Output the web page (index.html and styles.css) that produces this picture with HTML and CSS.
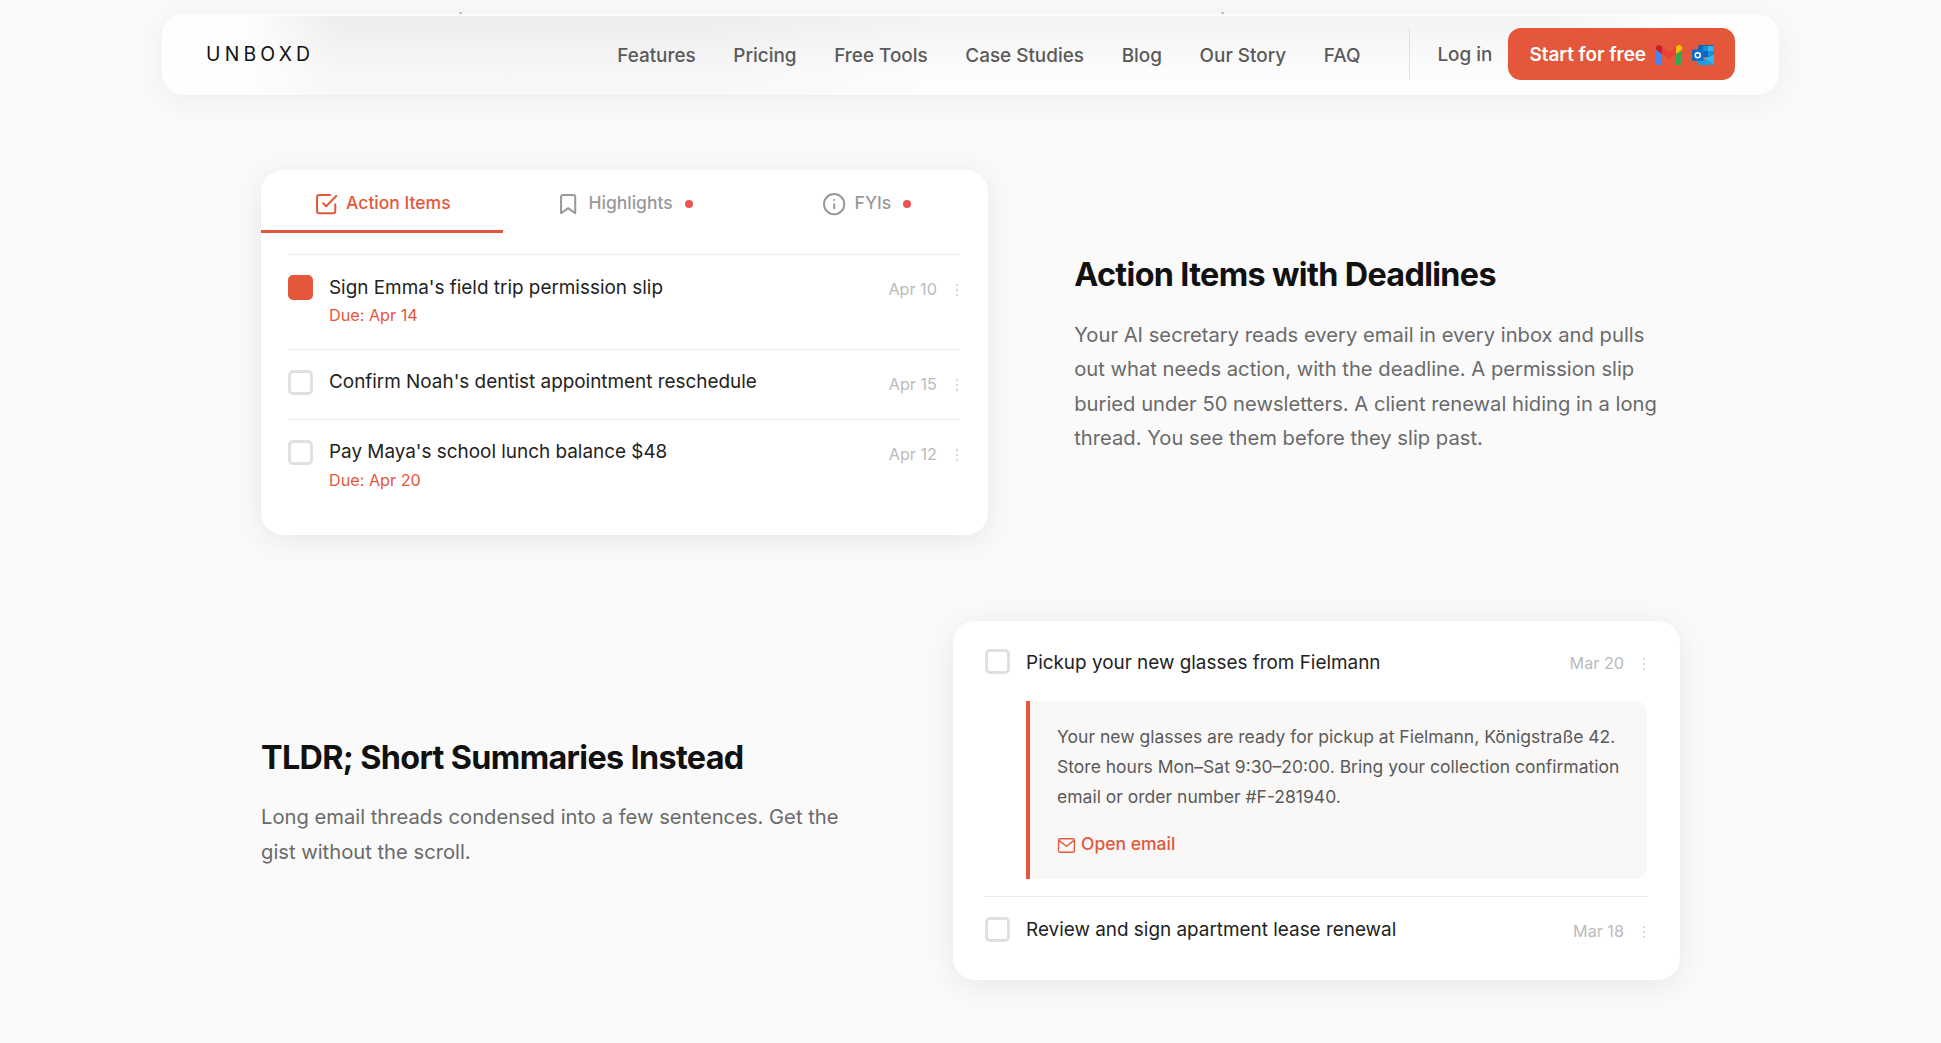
FILE: index.html
```html
<!DOCTYPE html>
<html lang="en">
<head>
  <meta charset="UTF-8">
  <meta name="viewport" content="width=device-width, initial-scale=1.0">
  <title>Unboxd</title>
  <link rel="stylesheet" href="styles.css">
</head>
<body>

  <header class="navbar">
    <a class="logo">UNBOXD</a>
    <nav class="nav-links">
      <a>Features</a>
      <a>Pricing</a>
      <a>Free Tools</a>
      <a>Case Studies</a>
      <a>Blog</a>
      <a>Our Story</a>
      <a>FAQ</a>
    </nav>
    <div class="nav-actions">
      <a class="login">Log in</a>
      <a class="btn-start">
        <span>Start for free</span>
        <svg class="gmail" viewBox="0 0 26 20">
          <path d="M0 5v13.2C0 19.2.8 20 1.8 20H6V8.5z" fill="#4285f4"/>
          <path d="M20 8.5V20h4.2c1 0 1.8-.8 1.8-1.8V5z" fill="#34a853"/>
          <path d="M20 2v7l6-4.3V3c0-2.6-2.8-3.8-4.7-2.3z" fill="#fbbc04"/>
          <path d="M6 9V2l7 5.200L20 2v7l-7 5.200z" fill="#ea4335"/>
          <path d="M0 3v1.700L6 9V2L4.700.7C2.800-.8 0 .4 0 3z" fill="#c5221f"/>
        </svg>
        <svg class="outlook" viewBox="0 0 23 20">
          <rect x="6" y="0" width="15.5" height="12" rx="1" fill="#1066b8"/>
          <path d="M11 1h5v5h-5z" fill="#1490df"/>
          <path d="M16 1h5.500v5H16z" fill="#35b8f1"/>
          <path d="M16 6h5.500v5H16z" fill="#1c8fe0"/>
          <path d="M5 11l8.500 4L22 9.500V19a1 1 0 0 1-1 1H6a1 1 0 0 1-1-1z" fill="#1b9de2"/>
          <path d="M22 9.500V19L12 13.800z" fill="#35b8f1"/>
          <rect x="0" y="4.5" width="11.5" height="11.5" rx="1" fill="#0a6ccb"/>
          <circle cx="5.7" cy="10.2" r="2.5" fill="none" stroke="#fff" stroke-width="1.5"/>
        </svg>
      </a>
    </div>
  </header>

  <main class="features">

    <section class="feature">
      <div class="card card-tabs">
        <div class="tabs">
          <div class="tab active">
            <svg class="icon" viewBox="0 0 24 24"><path d="M9 11l3 3L22 4"/><path d="M21 12v7a2 2 0 0 1-2 2H5a2 2 0 0 1-2-2V5a2 2 0 0 1 2-2h11"/></svg>
            <span>Action Items</span>
          </div>
          <div class="tab">
            <svg class="icon" viewBox="0 0 24 24"><path d="M19 21l-7-5-7 5V5a2 2 0 0 1 2-2h10a2 2 0 0 1 2 2z"/></svg>
            <span>Highlights</span>
            <i class="dot"></i>
          </div>
          <div class="tab">
            <svg class="icon" viewBox="0 0 24 24"><circle cx="12" cy="12" r="10"/><path d="M12 16v-4M12 8h.01"/></svg>
            <span>FYIs</span>
            <i class="dot"></i>
          </div>
        </div>
        <div class="list">
          <div class="item">
            <span class="check checked"></span>
            <div class="item-body">
              <div class="item-title">Sign Emma's field trip permission slip</div>
              <div class="item-due">Due: Apr 14</div>
            </div>
            <span class="date">Apr 10</span>
            <span class="more"><i></i><i></i><i></i></span>
          </div>
          <div class="item">
            <span class="check"></span>
            <div class="item-body">
              <div class="item-title">Confirm Noah's dentist appointment reschedule</div>
            </div>
            <span class="date">Apr 15</span>
            <span class="more"><i></i><i></i><i></i></span>
          </div>
          <div class="item">
            <span class="check"></span>
            <div class="item-body">
              <div class="item-title">Pay Maya's school lunch balance $48</div>
              <div class="item-due">Due: Apr 20</div>
            </div>
            <span class="date">Apr 12</span>
            <span class="more"><i></i><i></i><i></i></span>
          </div>
        </div>
      </div>
      <div class="copy">
        <h2>Action Items with Deadlines</h2>
        <p>Your AI secretary reads every email in every inbox and pulls out what needs action, with the deadline. A permission slip buried under 50 newsletters. A client renewal hiding in a long thread. You see them before they slip past.</p>
      </div>
    </section>

    <section class="feature reverse">
      <div class="copy">
        <h2>TLDR; Short Summaries Instead</h2>
        <p>Long email threads condensed into a few sentences. Get the gist without the scroll.</p>
      </div>
      <div class="card card-summary">
        <div class="item">
          <span class="check"></span>
          <div class="item-body">
            <div class="item-title">Pickup your new glasses from Fielmann</div>
          </div>
          <span class="date">Mar 20</span>
          <span class="more"><i></i><i></i><i></i></span>
        </div>
        <div class="summary">
          <p>Your new glasses are ready for pickup at Fielmann, Königstraße 42. Store hours Mon–Sat 9:30–20:00. Bring your collection confirmation email or order number #F-281940.</p>
          <a class="open-email">
            <svg viewBox="0 0 24 24"><rect x="2" y="3.5" width="20" height="17" rx="2"/><path d="M2.500 5.500L12 13l9.500-7.500"/></svg>
            <span>Open email</span>
          </a>
        </div>
        <div class="item last">
          <span class="check"></span>
          <div class="item-body">
            <div class="item-title">Review and sign apartment lease renewal</div>
          </div>
          <span class="date">Mar 18</span>
          <span class="more"><i></i><i></i><i></i></span>
        </div>
      </div>
    </section>

  </main>

</body>
</html>
```
FILE: styles.css
```css
* {
  box-sizing: border-box;
}

body {
  margin: 0;
  min-height: 100vh;
  padding-top: 13px;
  background: #fafafa;
  font-family: Inter, "Liberation Sans", sans-serif;
  color: #222;
}

/* navbar */
.navbar {
  position: relative;
  display: flex;
  align-items: center;
  width: 1617px;
  height: 82px;
  margin: 0 auto;
  padding: 0 44px 0 44px;
  border-radius: 22px;
  background:
    linear-gradient(to bottom, #fbfbfb 3px, rgba(255, 255, 255, 0) 3px),
    linear-gradient(to right, #fefefe 5%, rgba(254, 254, 254, 0) 11%, rgba(254, 254, 254, 0) 85%, #fefefe 94%),
    linear-gradient(to right, rgba(0, 0, 0, 0.025) 34%, rgba(0, 0, 0, 0) 48%),
    linear-gradient(to bottom, #f2f2f2, #fdfdfd 75%);
  box-shadow: 0 5px 32px rgba(0, 0, 0, 0.06);
}

.navbar::before,
.navbar::after {
  content: "";
  position: absolute;
  top: -1px;
  width: 3px;
  height: 2px;
  background: #c4c4c4;
}

.navbar::before {
  left: 297px;
}

.navbar::after {
  left: 1059px;
}

.logo {
  font-size: 19.4px;
  letter-spacing: 4.2px;
  color: #111;
}

.nav-links {
  display: flex;
  gap: 37.7px;
  margin-left: auto;
  padding-top: 2px;
  font-size: 18.9px;
  font-weight: 500;
  color: #5a5a5a;
}

.nav-actions {
  display: flex;
  align-items: center;
  height: 52px;
  margin-left: 49px;
  padding-left: 27px;
  border-left: 1px solid #e0e0e0;
}

.login {
  margin-right: 16px;
  font-size: 18.9px;
  font-weight: 500;
  color: #5a5a5a;
}

.btn-start {
  display: flex;
  align-items: center;
  height: 52px;
  padding: 0 20px 0 21px;
  border-radius: 13px;
  background: #e5573b;
  color: #fff;
  font-size: 18.9px;
  font-weight: 600;
}

.gmail {
  width: 26px;
  height: 20px;
  margin: 2px 10px 0 10px;
}

.outlook {
  width: 23px;
  height: 20px;
  margin-top: 2px;
}

/* feature rows */
.features {
  display: flex;
  flex-direction: column;
  gap: 86px;
  width: 1419px;
  margin: 75px auto 0;
}

.feature {
  display: grid;
  grid-template-columns: 1.2fr 1fr;
  gap: 86.3px;
  align-items: center;
}

.feature.reverse {
  grid-template-columns: 1fr 1.2fr;
}

.copy h2 {
  margin: 0 0 18px;
  font-size: 32.35px;
  font-weight: 700;
  line-height: 50px;
  letter-spacing: -0.65px;
  color: #111;
}

.copy p {
  margin: 0;
  font-size: 20.2px;
  line-height: 34.3px;
  color: #6a6a6a;
}

.reverse .copy h2 {
  padding-top: 1px;
  margin-bottom: 17px;
}

.card {
  background: #fff;
  border-radius: 22px;
  box-shadow: 0 5px 32px rgba(0, 0, 0, 0.08);
}

.card-tabs {
  height: 365px;
}

.card-summary {
  height: 359px;
  padding: 27px 33px 0 32px;
}

/* tabs */
.tabs {
  display: grid;
  grid-template-columns: repeat(3, 1fr);
  height: 63px;
}

.tab {
  display: flex;
  align-items: center;
  justify-content: center;
  gap: 8px;
  padding-top: 8px;
  border-bottom: 3px solid transparent;
  font-size: 17.5px;
  font-weight: 500;
  color: #999;
}

.tab span {
  margin-top: -4px;
}

.tab.active {
  color: #e5573b;
  border-bottom-color: #e5573b;
}

.icon {
  width: 24.3px;
  height: 24.3px;
  overflow: visible;
  fill: none;
  stroke: currentColor;
  stroke-width: 2;
  stroke-linecap: round;
  stroke-linejoin: round;
}

.dot {
  width: 8px;
  height: 8px;
  margin-left: 4px;
  border-radius: 50%;
  background: #ef5350;
}

/* items */
.list {
  padding: 21px 28px 0 27px;
}

.item {
  display: flex;
  align-items: flex-start;
  padding: 19px 0 23px;
}

.list .item {
  border-top: 1px solid #eee;
}

.check {
  width: 25px;
  height: 25px;
  margin: 1px 16px 0 0;
  border: 3px solid #e0e0e0;
  border-radius: 5px;
}

.check.checked {
  background: #e5573b;
  border-color: #e5573b;
}

.item-body {
  flex: 1;
}

.item-title {
  font-size: 18.9px;
  line-height: 26.4px;
  color: #222;
}

.list .item:first-child .item-title {
  padding-top: 1px;
}

.item-due {
  margin-top: 4px;
  font-size: 16.2px;
  line-height: 21px;
  color: #e5573b;
}

.date {
  margin-top: 3px;
  font-size: 16.2px;
  line-height: 24px;
  color: #bbb;
}

.more {
  display: flex;
  flex-direction: column;
  gap: 3px;
  margin: 10px 2px 0 19px;
}

.more i {
  width: 2px;
  height: 2px;
  border-radius: 50%;
  background: #ccc;
}

/* summary card */
.card-summary .item {
  padding: 0;
}

.card-summary .item-title {
  padding-top: 2px;
}

.card-summary .item.last {
  margin-top: 17px;
  padding-top: 19px;
  border-top: 1px solid #eaeaea;
}

.card-summary .item.last .item-title {
  padding-top: 1px;
}

.summary {
  height: 178px;
  margin: 25px 0 0 41px;
  padding: 21px 23px 0 27px;
  border-left: 4px solid #e5573b;
  border-radius: 0 11px 11px 0;
  background: #f9f8f7;
}

.summary p {
  margin: 0;
  font-size: 17.5px;
  line-height: 29.7px;
  color: #5a5a5a;
}

.open-email {
  display: flex;
  align-items: center;
  gap: 5px;
  margin-top: 21px;
  font-size: 17.5px;
  font-weight: 500;
  color: #e5573b;
}

.open-email svg {
  width: 19px;
  height: 19px;
  margin-top: 3px;
  fill: none;
  stroke: currentColor;
  stroke-width: 1.7;
  stroke-linejoin: round;
}
```
